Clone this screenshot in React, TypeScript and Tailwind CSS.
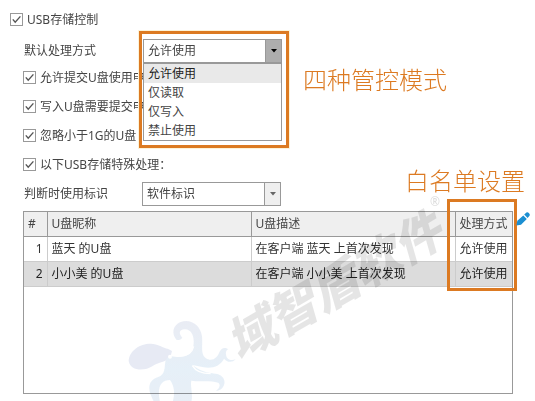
import { useState } from 'react';
import type { ReactNode } from 'react';

const MODES = ['允许使用', '仅读取', '仅写入', '禁止使用'];

const DEVICES = [
  { id: 1, name: '蓝天 的U盘', desc: '在客户端 蓝天 上首次发现', mode: '允许使用' },
  { id: 2, name: '小小美 的U盘', desc: '在客户端 小小美 上首次发现', mode: '允许使用' },
];

function CheckRow({ children, nested = false }: { children: ReactNode; nested?: boolean }) {
  return (
    <label className={nested ? 'flex h-[29px] items-center gap-1 pl-[23px]' : 'flex h-[29px] items-center gap-1 pl-[10px]'}>
      <span className="relative flex h-[13px] w-[13px] shrink-0">
        <input
          type="checkbox"
          defaultChecked
          className="peer h-[13px] w-[13px] appearance-none border border-[#999] bg-white"
        />
        <svg
          viewBox="0 0 13 13"
          className="pointer-events-none absolute inset-0 hidden peer-checked:block"
          fill="none"
          stroke="#555"
          strokeWidth="1.4"
        >
          <path d="M2.8 6.4 5.2 9.2 10.4 3.4" />
        </svg>
      </span>
      <span className="whitespace-nowrap">{children}</span>
    </label>
  );
}

function Caret({ className }: { className: string }) {
  return (
    <span className={className}>
      <svg viewBox="0 0 6 4" width="6" height="4" fill="currentColor">
        <path d="M0 0h6L3 3.6z" />
      </svg>
    </span>
  );
}

function Octopus() {
  return (
    <svg
      viewBox="51 81 330 252"
      className="pointer-events-none absolute left-[103px] top-[106px] h-[84px] w-[110px] opacity-85 mix-blend-multiply"
    >
      <defs>
        <linearGradient id="octo" x1="0" y1="0" x2="0" y2="1">
          <stop offset="0" stopColor="#e6e9f3" />
          <stop offset="0.6" stopColor="#e2eef7" />
          <stop offset="1" stopColor="#e4ebf5" />
        </linearGradient>
      </defs>
      <g fill="url(#octo)">
        <path fill="#e3e7f3" d="M56 210C57 180 88 158 122 158C145 159 158 170 175 174L186 180L182 196C172 214 148 212 128 225C103 242 60 240 56 210Z" />
        <path d="M199 146C184 128 188 103 212 93C243 82 272 104 276 136C279 162 270 188 288 202C304 213 322 202 328 184C332 172 344 166 355 175C346 178 346 190 351 200C357 208 367 209 377 205C366 217 350 213 342 203C334 220 316 230 294 230C276 230 262 224 247 222C270 240 291 246 316 248C336 250 346 264 343 278C340 292 330 299 318 299C329 291 333 281 324 275C302 267 269 273 244 269C240 288 250 308 244 333H188C196 305 192 283 180 267C153 267 140 288 150 333H132C124 316 111 295 122 274C133 256 153 262 161 243C167 228 162 214 171 202C179 190 193 198 207 198C230 198 247 185 250 166C254 142 248 116 225 115C207 115 205 128 217 140C212 147 205 149 199 146Z" />
      </g>
      <circle cx="180" cy="197" r="6" fill="#fff" />
      <path d="M251 166C247 184 232 195 210 195M247 224C257 241 278 248 302 248" fill="none" stroke="#fff" strokeWidth="4" />
    </svg>
  );
}

export default function App() {
  const [mode, setMode] = useState(MODES[0]);

  return (
    <main className="relative overflow-hidden bg-white pt-[5px] pb-[7px] font-['Noto_Sans','Noto_Sans_CJK_SC',sans-serif] text-xs leading-4 text-[#444]">
      <CheckRow>USB存储控制</CheckRow>

      {/* Default mode, with its list open */}
      <div className="flex h-[29px] items-end pl-6">
        <label htmlFor="mode" className="w-[119px] leading-6">默认处理方式</label>
        <div className="relative z-10 h-6 w-[139px]">
          <select
            id="mode"
            value={mode}
            onChange={(e) => setMode(e.target.value)}
            className="h-6 w-full appearance-none border border-[#999] bg-white pl-1 outline-none"
          >
            {MODES.map((m) => (
              <option key={m}>{m}</option>
            ))}
          </select>
          <Caret className="pointer-events-none absolute inset-y-0 right-0 flex w-[17px] items-center justify-center border border-[#999] bg-[#adadad] text-black" />
          <ul role="listbox" className="absolute inset-x-0 top-6 border border-[#999] bg-white">
            {MODES.map((m) => (
              <li
                key={m}
                role="option"
                aria-selected={m === mode}
                onClick={() => setMode(m)}
                className="h-[19px] pl-1 leading-[19px] aria-selected:bg-[#e9e9e9] aria-selected:text-[#222]"
              >
                {m}
              </li>
            ))}
          </ul>
          <div className="pointer-events-none absolute -left-1 -top-2 h-[117px] w-[150px] border-3 border-[#dc7a22] outline outline-[#fdf3d8]" />
          <p className="absolute left-40 top-6 whitespace-nowrap font-['KaiTi','Noto_Sans_CJK_SC',sans-serif] text-2xl leading-8 font-light text-[#dc7a22]">
            四种管控模式
          </p>
        </div>
      </div>

      <CheckRow nested>允许提交U盘使用申请</CheckRow>
      <CheckRow nested>写入U盘需要提交申请</CheckRow>
      <CheckRow nested>忽略小于1G的U盘</CheckRow>
      <CheckRow nested>以下USB存储特殊处理：</CheckRow>

      <div className="flex h-[29px] items-center pl-6">
        <label htmlFor="ident" className="w-[118px]">判断时使用标识</label>
        <div className="relative h-6 w-[139px]">
          <select id="ident" className="h-6 w-full appearance-none border border-[#999] bg-white pl-1 outline-none">
            <option>软件标识</option>
          </select>
          <Caret className="pointer-events-none absolute inset-y-0 right-0 flex w-[17px] items-center justify-center border border-[#999] bg-[#efefef] text-[#666]" />
        </div>
      </div>

      {/* Whitelist */}
      <section className="relative mt-[3px] mr-[22px] ml-[23px] min-h-[183px] border border-[#999]">
        <table className="w-full table-fixed border-collapse text-left">
          <thead>
            <tr className="h-6 border-b border-[#999] bg-[#efefef]">
              <th className="w-[23px] border-r border-[#999] pl-1 font-normal">#</th>
              <th className="border-r border-[#999] pl-1 font-normal">U盘昵称</th>
              <th className="border-r border-[#999] pl-1 font-normal">U盘描述</th>
              <th className="w-[57px] pl-1 font-normal whitespace-nowrap">处理方式</th>
            </tr>
          </thead>
          <tbody>
            {DEVICES.map((d) => (
              <tr key={d.id} className="h-[25px] border-b border-[#ccc] text-[#333] even:bg-[#dcdcdc] even:text-[#222]">
                <td className="border-r border-[#ccc] pr-1 text-right">{d.id}</td>
                <td className="border-r border-[#ccc] pl-1">{d.name}</td>
                <td className="border-r border-[#ccc] pl-1">{d.desc}</td>
                <td className="pl-1 whitespace-nowrap">{d.mode}</td>
              </tr>
            ))}
          </tbody>
        </table>

        <Octopus />
        <div className="pointer-events-none absolute left-[190px] top-[50px] -rotate-30 whitespace-nowrap text-5xl leading-12 font-black text-black/10 italic">
          域智盾软件
        </div>
        <span className="pointer-events-none absolute -top-[18px] left-[406px] text-[#ddd]">®</span>

        <p className="absolute -right-[13px] -top-12 whitespace-nowrap font-['KaiTi','Noto_Sans_CJK_SC',sans-serif] text-2xl leading-8 font-light text-[#dc7a22]">
          白名单设置
        </p>
        <div className="pointer-events-none absolute -right-[5px] -top-[13px] h-[92px] w-[70px] border-3 border-[#dc7a22]" />
        <button type="button" aria-label="编辑" className="absolute -right-[18px] top-0 h-[14px] w-[14px]">
          <svg viewBox="0 0 14 14" fill="#1b8fd2">
            <path d="M0.4 13.6 1.3 8.8 7.3 3.4 10.8 6.9 5 12.8ZM8.2 2.6 10.4 0.6Q11.6 -0.2 12.8 1L13.4 1.7Q14.2 2.9 13.3 4.1L11.6 6Z" />
          </svg>
        </button>
      </section>
    </main>
  );
}
